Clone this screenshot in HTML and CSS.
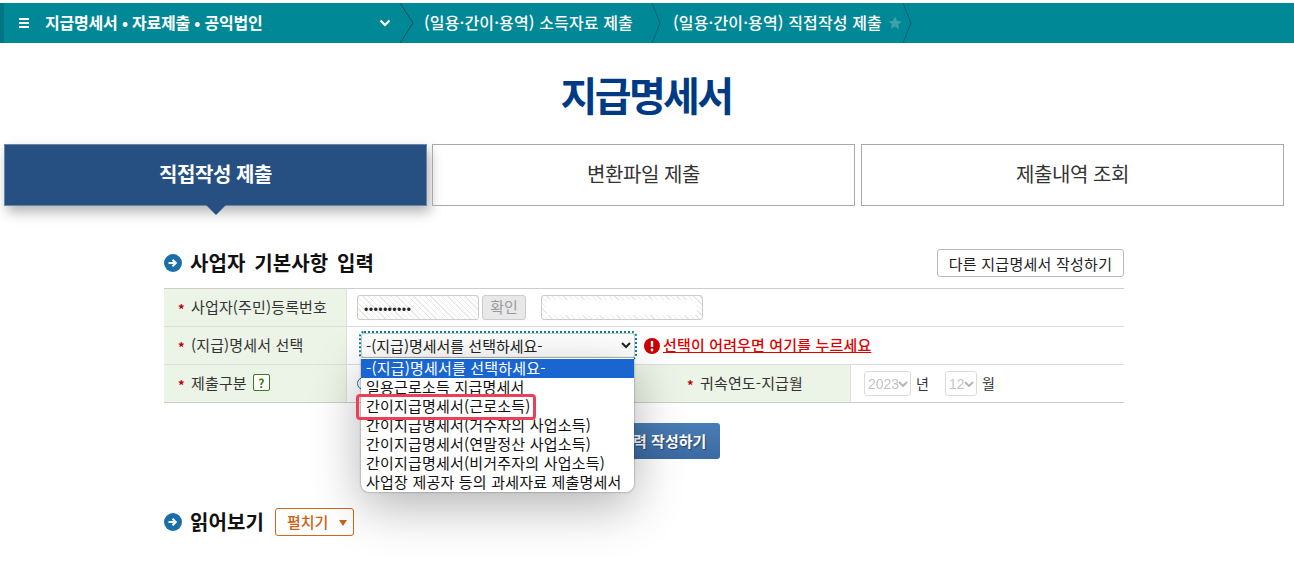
FILE: index.html
```html
<!DOCTYPE html>
<html lang="ko">
<head>
<meta charset="utf-8">
<title>지급명세서</title>
<link rel="stylesheet" href="styles.css">
</head>
<body>
<nav class="crumbs">
  <div class="crumb-main">
    <svg class="burger" width="11" height="10" viewBox="0 0 11 10"><path d="M0 0h10v2H0zM0 4h10v2H0zM0 8h10v2H0z" fill="#fff"/></svg>
    <span class="crumb-main-text">지급명세서 • 자료제출 • 공익법인</span>
    <svg class="chev" width="12" height="8" viewBox="0 0 12 8"><path d="M1.5 1.5 6 6l4.5-4.5" fill="none" stroke="#fff" stroke-width="2.2"/></svg>
  </div>
  <svg class="sep" width="15" height="40" viewBox="0 0 15 40"><path d="M1 0 14 20 1 40" fill="none" stroke="#0c4d5c"/></svg>
  <div class="crumb crumb-a">(일용·간이·용역) 소득자료 제출</div>
  <svg class="sep" width="15" height="40" viewBox="0 0 15 40"><path d="M1 0 9 20 1 40" fill="none" stroke="#0c5f70"/></svg>
  <div class="crumb crumb-b">(일용·간이·용역) 직접작성 제출</div>
  <svg class="star" width="14" height="14" viewBox="0 0 24 24"><path d="M12 1l3.4 7.3 7.9 1-5.8 5.5 1.5 7.9L12 18l-7 3.7 1.5-7.9L.7 9.3l7.9-1z" fill="#3fa0ab"/></svg>
  <svg class="sep" width="15" height="40" viewBox="0 0 15 40"><path d="M1 0 9 20 1 40" fill="none" stroke="#0c5f70"/></svg>
</nav>

<h1 class="title">지급명세서</h1>

<div class="tabs">
  <a class="tab tab-on">직접작성 제출</a>
  <a class="tab">변환파일 제출</a>
  <a class="tab">제출내역 조회</a>
</div>

<main class="content">
  <div class="sec-head">
    <svg class="go" width="18" height="18" viewBox="0 0 18 18"><circle cx="9" cy="9" r="9" fill="#1a6fa8"/><path d="M4.5 9h7M8.5 5.8 11.8 9l-3.3 3.2" fill="none" stroke="#fff" stroke-width="2"/></svg>
    <h2 class="sec-title">사업자 기본사항 입력</h2>
    <button class="other-btn">다른 지급명세서 작성하기</button>
  </div>

  <div class="form-table">
    <div class="row">
      <div class="th"><i class="req">*</i>사업자(주민)등록번호</div>
      <div class="td td-wide">
        <span class="hatch hatch-id">••••••••••</span>
        <span class="confirm">확인</span>
        <span class="hatch hatch-name"><span class="hatch-inner"></span></span>
      </div>
    </div>
    <div class="row">
      <div class="th"><i class="req">*</i>(지급)명세서 선택</div>
      <div class="td td-wide">
        <select class="kind"><option>-(지급)명세서를 선택하세요-</option></select>
        <svg class="warn" width="16" height="16" viewBox="0 0 16 16"><circle cx="8" cy="8" r="8" fill="#cc0000"/><path d="M8 3v6" stroke="#fff" stroke-width="2.4"/><circle cx="8" cy="12" r="1.4" fill="#fff"/></svg>
        <a class="help-link">선택이 어려우면 여기를 누르세요</a>
      </div>
    </div>
    <div class="row">
      <div class="th"><i class="req">*</i>제출구분<span class="qmark">?</span></div>
      <div class="td td-mid"><span class="radio"></span></div>
      <div class="th th-mid"><i class="req">*</i>귀속연도-지급월</div>
      <div class="td td-date">
        <select class="mini mini-y" disabled><option>2023</option></select><span class="unit">년</span>
        <select class="mini mini-m" disabled><option>12</option></select><span class="unit">월</span>
      </div>
    </div>
  </div>

  <div class="submit-row"><button class="submit">명세서 입력 작성하기</button></div>

  <div class="sec-head sec-read">
    <svg class="go" width="18" height="18" viewBox="0 0 18 18"><circle cx="9" cy="9" r="9" fill="#1a6fa8"/><path d="M4.5 9h7M8.5 5.8 11.8 9l-3.3 3.2" fill="none" stroke="#fff" stroke-width="2"/></svg>
    <h2 class="sec-title">읽어보기</h2>
    <button class="fold">펼치기<span class="tri"></span></button>
  </div>
</main>

<ul class="drop">
  <li class="opt opt-on">-(지급)명세서를 선택하세요-</li>
  <li class="opt">일용근로소득 지급명세서</li>
  <li class="opt">간이지급명세서(근로소득)</li>
  <li class="opt">간이지급명세서(거주자의 사업소득)</li>
  <li class="opt">간이지급명세서(연말정산 사업소득)</li>
  <li class="opt">간이지급명세서(비거주자의 사업소득)</li>
  <li class="opt">사업장 제공자 등의 과세자료 제출명세서</li>
</ul>
<div class="mark"></div>
</body>
</html>
```
FILE: styles.css
```css
* { box-sizing: border-box; }
html, body { margin: 0; padding: 0; }
body {
  position: relative;
  height: 566px;
  overflow: hidden;
  background: #fff;
  color: #222;
  font-family: "Noto Sans CJK KR", "Noto Sans", sans-serif;
  font-size: 15px;
}
.crumbs {
  display: flex;
  align-items: center;
  height: 40px;
  margin-top: 3px;
  background: #008896;
  border-left: 4px solid #007480;
  color: #fff;
}
.crumb-main {
  display: flex;
  align-items: center;
  width: 395px;
  padding-left: 15px;
}
.burger { margin-right: 15px; }
.crumb-main-text { flex: 1; padding-bottom: 2px; font-size: 16px; font-weight: 700; letter-spacing: -0.2px; }
.chev { margin-right: 8px; }
.sep { flex: none; }
.crumb { padding-bottom: 2px; font-size: 16px; font-weight: 500; white-space: nowrap; letter-spacing: .13px; }
.crumb-a { margin-left: 10px; width: 227px; }
.crumb-b { margin-left: 7px; width: 215px; }
.star { margin-right: 0; }
.title {
  margin: 23px 0 0;
  height: 78px;
  padding-right: 2px;
  text-align: center;
  font-size: 40px;
  line-height: 56px;
  font-weight: 700;
  color: #003a84;
  letter-spacing: -2.6px;
}
.tabs { display: flex; gap: 5px; padding-left: 4px; }
.tab {
  flex: none;
  width: 423px;
  position: relative;
  height: 62px;
  padding-bottom: 3px;
  border: 1px solid #aaa;
  display: flex;
  align-items: center;
  justify-content: center;
  font-size: 20px;
  font-weight: 400;
  color: #333;
  letter-spacing: -0.4px;
}
.tab:last-child { margin-left: 1px; }
.tab-on {
  background: #275082;
  border-color: #6b86a8;
  color: #fff;
  font-weight: 700;
  box-shadow: 3px 6px 12px rgba(0,0,0,.3);
}
.tab-on::after {
  content: "";
  position: absolute;
  left: 50%;
  margin-left: -10px;
  top: 100%;
  border: 10px solid transparent;
  border-top-color: #275082;
  border-bottom-width: 0;
}
.content { width: 960px; margin: 42px 0 0 164px; }
.sec-head { display: flex; align-items: center; height: 30px; }
.go { flex: none; margin-right: 8px; }
.sec-title { margin: 0; flex: 1; padding-bottom: 1px; font-size: 20px; font-weight: 700; color: #111; letter-spacing: .1px; word-spacing: 3px; }
.other-btn {
  width: 187px;
  height: 28px;
  padding: 0;
  background: #fff;
  border: 1px solid #bbb;
  border-radius: 3px;
  font: inherit;
  font-size: 15px;
  letter-spacing: .25px;
  color: #222;
}
.form-table { margin-top: 10px; border-top: 1px solid #ccc; }
.row { display: flex; height: 38px; border-bottom: 1px solid #ddd; }
.row:last-child { border-bottom-color: #ccc; }
.th {
  flex: none;
  width: 183px;
  display: flex;
  align-items: center;
  padding: 0 0 2px 14px;
  background: #ebf4e6;
  border-right: 1px solid #ddd;
  font-size: 15px;
  letter-spacing: .15px;
  color: #333;
}
.req {
  width: 13px;
  padding-top: 5px;
  color: #b00;
  font-style: normal;
  font-weight: 700;
  font-size: 13px;
  line-height: 14px;
}
.td { display: flex; align-items: center; padding-left: 10px; }
.td-wide { flex: 1; }
.td-mid { width: 283px; }
.th-mid { width: 221px; padding-left: 57px; }
.td-date { flex: 1; padding-left: 13px; }
.hatch {
  display: block;
  height: 25px;
  border: 1px solid #ccc;
  border-radius: 3px;
  background: repeating-linear-gradient(45deg, #fff 0 3px, #e8e8e8 3px 4px);
}
.hatch-id {
  width: 122px;
  padding-left: 6px;
  font-size: 13px;
  line-height: 23px;
  color: #222;
  letter-spacing: .3px;
}
.confirm {
  width: 44px;
  height: 25px;
  margin-left: 3px;
  text-align: center;
  background: #e8e8e8;
  border: 1px solid #ccc;
  border-radius: 3px;
  font-size: 15px;
  line-height: 21px;
  color: #999;
}
.hatch-name { width: 162px; margin-left: 15px; padding: 4px 5px; }
.hatch-inner { display: block; height: 100%; background: #fff; }
.kind {
  width: 274px;
  height: 25px;
  background: #fff;
  border: 1px solid #ccc;
  border-radius: 3px;
  outline: 2px dotted #008896;
  outline-offset: 0;
  font: inherit;
  font-size: 15px;
  color: #222;
  margin-left: 4px;
  padding: 0;
}
.warn { margin-left: 9px; margin-right: 3px; }
.help-link { padding-bottom: 2px; color: #e00000; text-decoration: underline; font-size: 15px; font-weight: 500; letter-spacing: .15px; }
.qmark {
  width: 17px;
  height: 17px;
  margin-left: 6px;
  border: 1px solid #3d7a1c;
  border-radius: 2px;
  background: #fff;
  color: #3d7a1c;
  font-size: 12px;
  font-weight: 700;
  line-height: 15px;
  text-align: center;
}
.radio {
  width: 13px;
  height: 13px;
  border: 1px solid #1a6fc8;
  border-radius: 50%;
}
.mini {
  appearance: none;
  height: 25px;
  background: #fff url("data:image/svg+xml,%3Csvg xmlns='http://www.w3.org/2000/svg' width='10' height='6'%3E%3Cpath d='M1 1l4 4 4-4' fill='none' stroke='%23999' stroke-width='2'/%3E%3C/svg%3E") no-repeat right 2px center;
  border: 1px solid #ccc;
  border-radius: 3px;
  font-family: "Liberation Sans", sans-serif;
  font-size: 14px;
  color: #aaa;
  padding: 0 0 0 3px;
}
.mini-y { width: 47px; }
.mini-m { width: 32px; }
.unit { margin: 0 16px 0 5px; padding-bottom: 2px; font-size: 14px; color: #333; }
.unit:last-child { margin-right: 0; }
.submit-row { display: flex; justify-content: center; margin-top: 20px; }
.submit {
  width: 152px;
  height: 36px;
  padding: 0 8px 2px 0;
  border: 0;
  border-radius: 3px;
  background: linear-gradient(#4a7cb5, #3a6aa2);
  color: #fff;
  font: inherit;
  font-size: 15px;
  font-weight: 700;
  white-space: nowrap;
  text-shadow: 1px 1px 1px rgba(0,0,0,.4);
}
.sec-read { margin-top: 48px; }
.sec-read .sec-title { flex: none; margin-right: 11px; }
.fold {
  display: flex;
  align-items: center;
  width: 79px;
  height: 28px;
  padding: 0 0 2px 11px;
  background: #fff;
  border: 1px solid #cc6a1f;
  border-radius: 3px;
  font: inherit;
  font-size: 15px;
  font-weight: 500;
  color: #c8651a;
}
.tri {
  margin: 4px 0 0 11px;
  border: 4px solid transparent;
  border-top: 6px solid #c8651a;
  border-bottom: 0;
}
.drop {
  position: absolute;
  left: 361px;
  top: 358px;
  width: 273px;
  height: 134px;
  margin: 0;
  padding: 1px 0 0;
  list-style: none;
  background: #fff;
  border-radius: 0 0 8px 8px;
  box-shadow: 0 0 2px rgba(0,0,0,.5), 0 14px 50px rgba(0,0,0,.3);
  overflow: hidden;
}
.opt {
  height: 19px;
  padding-left: 5px;
  font-size: 15px;
  line-height: 18px;
  letter-spacing: .2px;
  white-space: nowrap;
  color: #111;
}
.opt-on { background: #1a66d0; color: #fff; }
.mark {
  position: absolute;
  left: 356px;
  top: 394px;
  width: 180px;
  height: 26px;
  border: 3px solid #ea4058;
  border-radius: 4px;
  filter: blur(.6px);
}
```
